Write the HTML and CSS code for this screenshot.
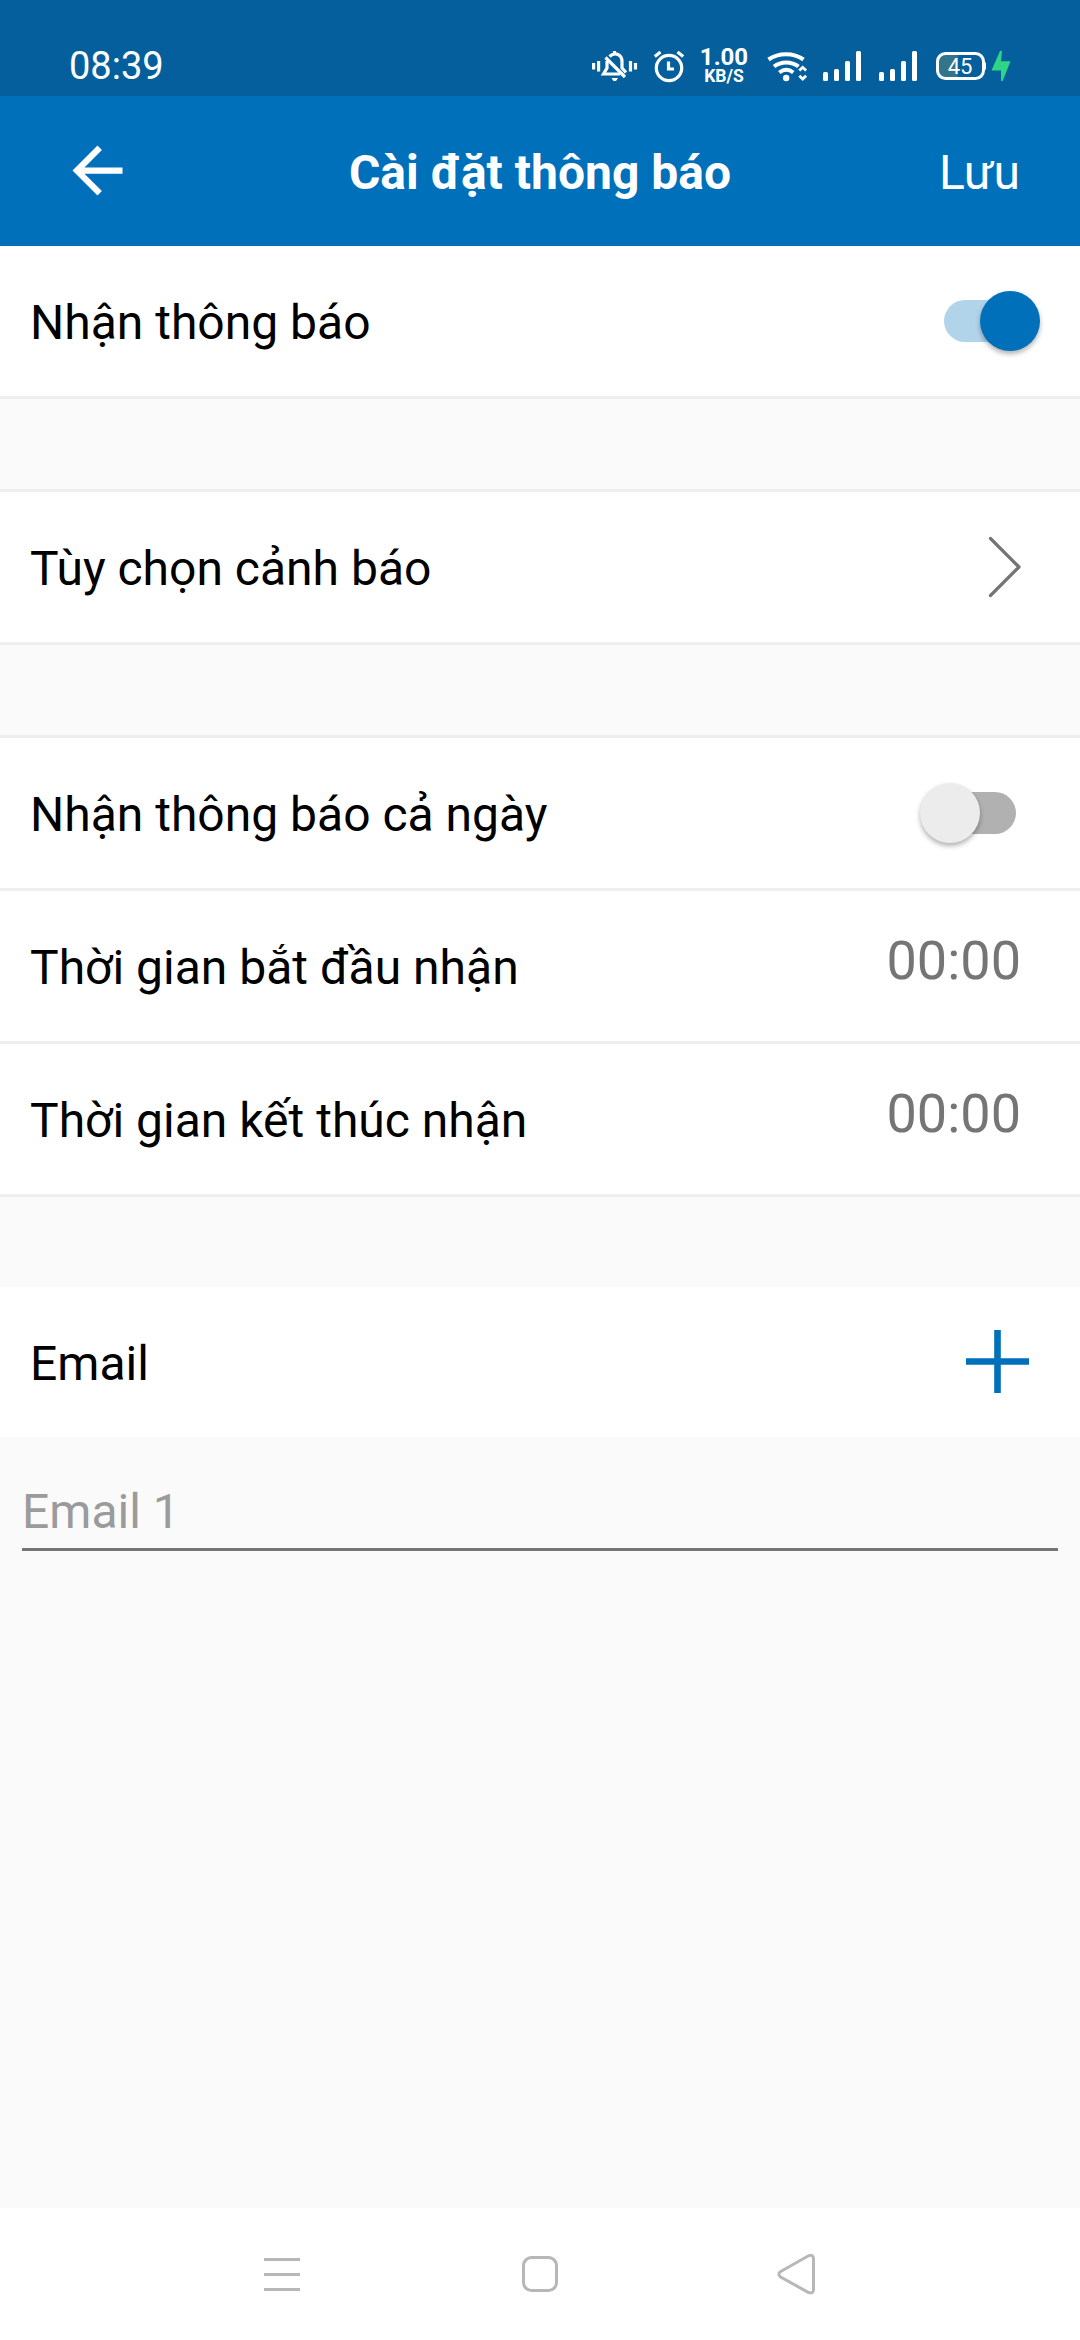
FILE: index.html
```html
<!DOCTYPE html>
<html lang="vi">
<head>
<meta charset="utf-8">
<title>Cài đặt thông báo</title>
<link rel="stylesheet" href="styles.css">
</head>
<body>
<div class="screen">
  <div class="status-bar">
    <span class="clock">08:39</span>
    <div class="status-icons">
      <svg class="icon-bell" width="46" height="36" viewBox="592 48 46 36" fill="none" stroke="#fff" stroke-width="3.200">
        <path d="M593.600 63v6.500M598.600 61v10.500M630.500 61v10.500M635.500 63v6.500"/>
        <path d="M614.500 51v3M609.500 56.500c6-5.500 12.500-1.500 12.500 5v6.500l4 4.500"/>
        <path d="M607 61v7l-3.500 6h16.500"/>
        <path d="M605.500 57.500l19.500 19.500"/>
        <path d="M611.500 78h6.500l-2 3h-2.500z" fill="#fff" stroke="none"/>
      </svg>
      <svg class="icon-alarm" width="32" height="36" viewBox="653 48 32 36" fill="none" stroke="#fff" stroke-width="3.200">
        <circle cx="669" cy="68" r="12.700"/>
        <path d="M668.500 61.500v7.500h5.500M654.800 56.500l5.700-4.500M677.500 52l5.700 4.500"/>
      </svg>
      <div class="net-speed"><span class="net-value">1.00</span><span class="net-unit">KB/S</span></div>
      <svg class="icon-wifi" width="42" height="36" viewBox="767 48 42 36" fill="none" stroke="#fff" stroke-width="4">
        <path d="M768.500 59.500c10-7 25-7 35 0M774 66.500c7-5.500 17.500-5.500 24.500 0M779.300 72.500c4.500-3.500 9.500-3.500 14 0"/>
        <circle cx="786.200" cy="78" r="3.200" fill="#fff" stroke="none"/>
        <path d="M799.300 70.500l3.400-3.200 3.400 3.200M799.300 75.800l3.400 3.200 3.400-3.200" stroke-width="2.800"/>
      </svg>
      <svg class="icon-signal" width="38" height="36" viewBox="823 48 38 36" fill="#fff">
        <rect x="823" y="72" width="5" height="9" rx="1.500"/><rect x="834" y="69" width="5" height="12" rx="1.500"/><rect x="845" y="61" width="5" height="20" rx="1.500"/><rect x="856" y="51" width="5" height="30" rx="1.500"/>
      </svg>
      <svg class="icon-signal" width="38" height="36" viewBox="823 48 38 36" fill="#fff">
        <rect x="823" y="72" width="5" height="9" rx="1.500"/><rect x="834" y="69" width="5" height="12" rx="1.500"/><rect x="845" y="61" width="5" height="20" rx="1.500"/><rect x="856" y="51" width="5" height="30" rx="1.500"/>
      </svg>
      <svg class="icon-battery" width="50" height="36" viewBox="936 48 50 36">
        <path d="M958 53h-13a7 7 0 0 0-7 7v12a7 7 0 0 0 7 7h13z" fill="#32748a"/>
        <rect x="937.500" y="53.500" width="46" height="25" rx="8" fill="none" stroke="#fff" stroke-width="3"/>
        <path d="M984 61.500q2 .5 2 2v5q0 1.500-2 2z" fill="#fff"/>
        <text class="battery-level" x="960" y="73.500" text-anchor="middle">45</text>
      </svg>
      <svg class="icon-bolt" width="20" height="36" viewBox="991 48 20 36" fill="#2fd486">
        <path d="M1000 51h2l-1 10.200h9.500l-7.800 19.800h-1.700V70.500h-9.500z"/>
      </svg>
    </div>
  </div>

  <header class="app-bar">
    <svg class="back" width="75" height="75" viewBox="0 0 24 24" fill="#fff"><path d="M20 11H7.830l5.590-5.590L12 4l-8 8 8 8 1.410-1.410L7.830 13H20v-2z"/></svg>
    <h1 class="title">Cài đặt thông báo</h1>
    <span class="save">Lưu</span>
  </header>

  <main class="content">
    <section class="group group-first">
      <div class="row"><span class="label">Nhận thông báo</span><span class="switch switch-on"><span class="thumb"></span></span></div>
    </section>
    <section class="group">
      <div class="row"><span class="label">Tùy chọn cảnh báo</span>
        <svg class="chevron" width="34" height="64" viewBox="0 0 34 64" fill="none" stroke="#757575" stroke-width="3.200" stroke-linecap="round" stroke-linejoin="round"><path d="M2.500 3.500L31 32 2.500 60.500"/></svg>
      </div>
    </section>
    <section class="group">
      <div class="row"><span class="label">Nhận thông báo cả ngày</span><span class="switch"><span class="thumb"></span></span></div>
      <div class="row"><span class="label">Thời gian bắt đầu nhận</span><span class="time">00:00</span></div>
      <div class="row"><span class="label">Thời gian kết thúc nhận</span><span class="time">00:00</span></div>
    </section>
    <section class="group group-plain">
      <div class="row"><span class="label">Email</span>
        <svg class="plus" width="63" height="63" viewBox="0 0 63 63" stroke="#0070bb" stroke-width="6.600"><path d="M31.500 0v63M0 31.500h63"/></svg>
      </div>
    </section>
    <div class="field"><span class="hint">Email 1</span></div>
  </main>

  <nav class="nav-bar">
    <svg width="42" height="42" viewBox="0 0 42 42" stroke="#b7b7b7" stroke-width="3" stroke-linecap="square"><path d="M4.500 6.500h33M4.500 21.500h33M4.500 36.500h33"/></svg>
    <svg width="42" height="42" viewBox="0 0 42 42" fill="none" stroke="#b7b7b7" stroke-width="3"><rect x="4.500" y="4.500" width="33" height="33" rx="8"/></svg>
    <svg width="42" height="42" viewBox="0 0 42 42" fill="none" stroke="#b7b7b7" stroke-width="3"><path d="M3.700 18.500L31.500 2.800Q36.500 1 36.500 6v30.500Q36.500 41 31.500 39.500L3.700 24Q0 21 3.700 18.500z"/></svg>
  </nav>
</div>
</body>
</html>
```

FILE: styles.css
```css
* { box-sizing: border-box; }

body {
  margin: 0;
  font-family: Roboto, "Noto Sans", sans-serif;
  font-size: 48px;
  color: #000;
}

svg { display: block; flex: none; }

.screen {
  width: 1080px;
  height: 2340px;
  display: flex;
  flex-direction: column;
  background: #fafafa;
}

/* System status bar */
.status-bar {
  height: 96px;
  padding: 48px 69px 0 69px;
  display: flex;
  justify-content: space-between;
  background: #065f9d;
  color: #fff;
}

.clock {
  font-size: 38px;
  line-height: 36px;
}

.status-icons {
  display: flex;
  height: 36px;
}

.icon-alarm { margin-left: 15px; }

.net-speed {
  width: 50px;
  margin-left: 14px;
  display: flex;
  flex-direction: column;
  align-items: center;
  font-weight: 700;
}

.net-value { font-size: 24px; line-height: 19px; }
.net-unit { font-size: 17.5px; line-height: 19px; }

.icon-wifi { margin-left: 18px; }
.icon-signal { margin-left: 14px; }
.icon-signal + .icon-signal { margin-left: 18px; }
.icon-battery { margin-left: 19px; }
.icon-bolt { margin-left: 5px; }

.battery-level {
  font-size: 22px;
  fill: #fff;
}

/* Application bar */
.app-bar {
  height: 150px;
  padding: 0 60px;
  display: grid;
  grid-template-columns: 1fr auto 1fr;
  align-items: center;
  background: #0070bb;
  color: #fff;
}

.back { margin-bottom: 1px; }

.title {
  margin: 0;
  padding-top: 3px;
  font-size: 48px;
  font-weight: 700;
}

.save {
  justify-self: end;
  padding-top: 3px;
}

/* Settings list */
.content { flex: 1; }

.group {
  margin-bottom: 90px;
  border-top: 3px solid #eee;
}

.group-first { border-top: 0; }

.row {
  height: 153px;
  padding-left: 30px;
  display: flex;
  align-items: center;
  justify-content: space-between;
  background: #fff;
  border-bottom: 3px solid #eee;
}

.group-plain { margin-bottom: 0; border-top: 0; }
.group-plain .row { height: 150px; border-bottom: 0; }

.label { padding-top: 3px; }

.time {
  margin-right: 59px;
  padding-bottom: 12px;
  font-size: 54px;
  color: #757575;
}

.chevron { margin-right: 58px; }
.plus { margin: 0 51px 1px 0; }

.switch {
  width: 72px;
  height: 42px;
  margin: 0 64px 1px 0;
  display: flex;
  align-items: center;
  border-radius: 21px;
  background: #b1b1b1;
}

.thumb {
  flex: none;
  width: 60px;
  height: 60px;
  margin-left: -24px;
  border-radius: 50%;
  background: #ececec;
  box-shadow: 0 3px 5px rgba(0, 0, 0, 0.3);
}

.switch-on { background: #b2d4ea; }
.switch-on .thumb { margin-left: 36px; background: #0070bb; }

.field {
  height: 114px;
  margin: 0 22px;
  padding-top: 46px;
  border-bottom: 3px solid #757575;
}

.hint { color: #9b9b9b; }

/* System navigation bar */
.nav-bar {
  height: 132px;
  padding: 0 261px;
  display: flex;
  align-items: center;
  justify-content: space-between;
  background: #fff;
}
```
